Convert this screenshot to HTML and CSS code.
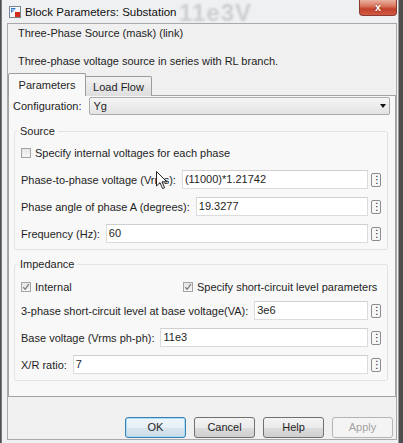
FILE: index.html
```html
<!DOCTYPE html>
<html>
<head>
<meta charset="utf-8">
<link rel="stylesheet" href="styles.css">
</head>
<body>
<div class="screen">
  <div class="window">
    <div class="titlebar">
      <svg class="appicon" width="12" height="12" viewBox="0 0 12 12">
        <rect x="0.5" y="0.5" width="11" height="11" fill="#f4f6f8" stroke="#7a8694"/>
        <path d="M2 2 L7 2 L2 7 Z" fill="#3b78c4"/>
        <path d="M2 3 L6 3 L4 6 Z" fill="#8fb7e8"/>
        <rect x="6" y="6" width="5" height="5" fill="#d32a1e"/>
      </svg>
      <span class="title">Block Parameters: Substation</span>
      <div class="ghost">11e3V</div>
      <div class="close">x</div>
    </div>
    <div class="client">
      <div class="mask-title">Three-Phase Source (mask) (link)</div>
      <div class="desc">Three-phase voltage source in series with RL branch.</div>
      <div class="tabs">
        <div class="tab active">Parameters</div>
        <div class="tab">Load Flow</div>
      </div>
      <div class="panel">
        <div class="config">
          <span class="config-label">Configuration:</span>
          <div class="select">Yg<span class="arrow"></span></div>
        </div>
        <fieldset class="group source">
          <legend>Source</legend>
          <div class="checkrow">
            <span class="check"><span class="box"></span>Specify internal voltages for each phase</span>
          </div>
          <div class="row"><span class="lbl">Phase-to-phase voltage (Vrms):</span><span class="field">(11000)*1.21742</span><span class="more">⋮</span></div>
          <div class="row"><span class="lbl">Phase angle of phase A (degrees):</span><span class="field">19.3277</span><span class="more">⋮</span></div>
          <div class="row"><span class="lbl">Frequency (Hz):</span><span class="field">60</span><span class="more">⋮</span></div>
        </fieldset>
        <fieldset class="group impedance">
          <legend>Impedance</legend>
          <div class="checkrow two">
            <span class="check"><span class="box checked"><svg width="8" height="8" viewBox="0 0 8 8"><path d="M1.2 4.2 L3.2 6.3 L6.8 1.2" fill="none" stroke="#7d7d7d" stroke-width="1.3"/></svg></span>Internal</span>
            <span class="check"><span class="box checked"><svg width="8" height="8" viewBox="0 0 8 8"><path d="M1.2 4.2 L3.2 6.3 L6.8 1.2" fill="none" stroke="#7d7d7d" stroke-width="1.3"/></svg></span>Specify short-circuit level parameters</span>
          </div>
          <div class="row first"><span class="lbl">3-phase short-circuit level at base voltage(VA):</span><span class="field">3e6</span><span class="more">⋮</span></div>
          <div class="row"><span class="lbl">Base voltage (Vrms ph-ph):</span><span class="field">11e3</span><span class="more">⋮</span></div>
          <div class="row"><span class="lbl">X/R ratio:</span><span class="field">7</span><span class="more">⋮</span></div>
        </fieldset>
      </div>
      <div class="buttons">
        <span class="btn default">OK</span>
        <span class="btn">Cancel</span>
        <span class="btn">Help</span>
        <span class="btn disabled">Apply</span>
      </div>
    </div>
  </div>
  <svg class="cursor" width="12" height="19" viewBox="0 0 12 19">
    <path d="M0.5 0.5 L0.5 15 L4 11.6 L6.6 17.6 L8.6 16.7 L6 10.8 L10.8 10.8 Z" fill="#fff" stroke="#222" stroke-width="1"/>
  </svg>
</div>
</body>
</html>
```
FILE: styles.css
```css
* { box-sizing: border-box; }
html, body { margin: 0; padding: 0; }
body {
  width: 403px;
  height: 443px;
  overflow: hidden;
  background: #4e4e4e;
  font-family: "Liberation Sans", Arial, sans-serif;
  font-size: 11px;
  color: #1e1e1e;
}
.screen {
  position: relative;
  width: 403px;
  height: 443px;
}
.window {
  width: 398px;
  height: 443px;
  margin-left: 1px;
  background: #eff0f1;
  border-left: 1px solid #7c7c7c;
  border-right: 1px solid #9a9a9a;
  padding: 0 1px 3px 5px;
  display: flex;
  flex-direction: column;
}
.titlebar {
  position: relative;
  height: 23px;
  display: flex;
  align-items: center;
  flex-shrink: 0;
}
.appicon {
  margin-left: 2px;
  margin-top: 1px;
  flex-shrink: 0;
}
.title {
  margin-left: 4px;
  font-family: "Liberation Sans Narrow", "Liberation Sans", sans-serif;
  font-size: 11.5px;
  color: #111;
  margin-top: 1px;
}
.ghost {
  position: absolute;
  left: 172px;
  top: 0;
  font-size: 24px;
  line-height: 25px;
  font-weight: bold;
  color: rgba(110, 110, 110, 0.26);
  filter: blur(1px);
  letter-spacing: 1px;
}
.close {
  align-self: flex-start;
  margin-left: auto;
  margin-right: 0;
  width: 38px;
  height: 16px;
  border: 1px solid #8a3a30;
  border-top: none;
  border-radius: 0 0 4px 4px;
  background: linear-gradient(#eab0a2 0%, #d9785f 40%, #c3412c 60%, #d25a44 100%);
  color: #fff;
  font-weight: bold;
  font-size: 11px;
  text-align: center;
  line-height: 14px;
  text-shadow: 0 0 2px #6a1a10;
}
.client {
  flex: 1;
  border: 1px solid #a9a9a9;
  background: #f0f0f0;
  display: flex;
  flex-direction: column;
}
.mask-title {
  line-height: 19px;
  padding-left: 10px;
}
.desc {
  line-height: 19px;
  padding-left: 10px;
  margin-top: 9px;
}
.tabs {
  display: flex;
  align-items: flex-end;
  margin-top: 2px;
  height: 23px;
  position: relative;
  z-index: 1;
}
.tab {
  height: 20px;
  width: 67px;
  margin-left: -1px;
  border: 1px solid #9c9c9c;
  border-bottom: none;
  border-radius: 2px 2px 0 0;
  background: linear-gradient(#f2f2f2, #dedede);
  text-align: center;
  line-height: 20px;
}
.tab.active {
  margin-left: 0;
  width: 78px;
  height: 23px;
  background: #f8f8f8;
  line-height: 22px;
}
.panel {
  height: 302px;
  margin-top: -1px;
  border: 1px solid #a3a3a3;
  background: #f8f8f8;
  padding: 1px 5px 0 4px;
}
.config {
  display: flex;
  align-items: center;
  height: 18px;
}
.select {
  flex: 1;
  margin-left: 7px;
  height: 18px;
  border: 1px solid #acacac;
  border-radius: 2px;
  background: linear-gradient(#f6f6f6, #e3e3e3);
  padding-left: 4px;
  line-height: 16px;
  display: flex;
  align-items: center;
}
.arrow {
  margin-left: auto;
  margin-right: 3px;
  width: 0;
  height: 0;
  border-left: 3.5px solid transparent;
  border-right: 3.5px solid transparent;
  border-top: 4px solid #111;
}
.group {
  margin: 9px 2px 0 1px;
  border: 1px solid #e3e3e3;
  border-radius: 2px;
  padding: 6px 6px 6px 6px;
  min-width: 0;
}
.group legend {
  line-height: 14px;
  padding: 0 3px;
  margin-left: -4px;
}
.impedance {
  margin-top: 7px;
  padding-top: 7px;
}
.checkrow {
  height: 18px;
  display: flex;
  align-items: center;
}
.checkrow.two {
  display: grid;
  grid-template-columns: 162px 1fr;
  align-items: center;
}
.check {
  display: flex;
  align-items: center;
}
.box {
  width: 10px;
  height: 10px;
  border: 1px solid #a4a4a4;
  background: linear-gradient(#e6e6e6, #f6f6f6);
  margin-right: 4px;
  display: flex;
  align-items: center;
  justify-content: center;
}
.row {
  display: flex;
  align-items: center;
  height: 19px;
  margin-top: 8px;
}
.row.first {
  margin-top: 5px;
}
.lbl {
  white-space: nowrap;
}
.field {
  flex: 1;
  margin-left: 6px;
  height: 19px;
  background: #fff;
  border: 1px solid #dcdcdc;
  border-top-color: #cfcfcf;
  padding-left: 2px;
  line-height: 17px;
}
.more {
  width: 10px;
  height: 14px;
  margin-left: 3px;
  border: 1px solid #8c8c8c;
  border-radius: 2px;
  background: #f7f7f7;
  font-family: "DejaVu Sans", sans-serif;
  font-size: 10px;
  line-height: 12px;
  text-align: center;
  color: #222;
}
.buttons {
  display: flex;
  justify-content: flex-end;
  gap: 8px;
  margin-top: 20px;
  padding-right: 3px;
}
.btn {
  width: 61px;
  height: 21px;
  border: 1px solid #707070;
  border-radius: 3px;
  background: linear-gradient(#f3f3f3 0%, #ebebeb 50%, #dddddd 51%, #cfcfcf 100%);
  text-align: center;
  line-height: 19px;
  color: #1e1e1e;
}
.btn.default {
  border-color: #3c7fb1;
  box-shadow: inset 0 0 0 1px #a9dcf6;
  background: linear-gradient(#f0f6fa 0%, #e6eff5 50%, #d7e5ee 51%, #cddde8 100%);
}
.btn.disabled {
  border-color: #b5b5b5;
  background: #f4f4f4;
  color: #a3a3a3;
}
.cursor {
  position: absolute;
  left: 156px;
  top: 171px;
}
```
